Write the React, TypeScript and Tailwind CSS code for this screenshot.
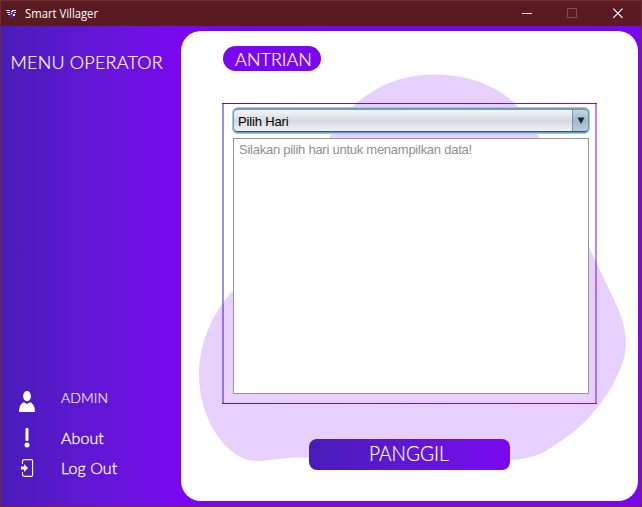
function TitleBar() {
  return (
    <header className="flex h-[25px] shrink-0 items-center bg-[#5b1922] text-white">
      <svg className="ml-[5px]" width="12" height="12" viewBox="0 0 12 12" shapeRendering="crispEdges">
        <path d="M0 2h4v1H0zM6 2h4v1H6zM1 4h3v1H1zM5 3h2v1H5zM8 4h2v1H8zM2 6h2v1H2zM7 6h2v2H7z" fill="#fff" />
        <path d="M4 4h3v2H4zM4 6h3v3H4zM5 9h1v1H5z" fill="#5b20d8" />
        <path d="M5 5h1v1H5z" fill="#fff" />
      </svg>
      <span className="ml-[7px] origin-left scale-x-[0.94] font-['Open_Sans',sans-serif] text-[12px] leading-none whitespace-nowrap">Smart Villager</span>
      <div className="ml-auto flex items-center">
        <svg width="120" height="25" viewBox="521 1 120 25" fill="none">
          <path d="M522 13.5h10" stroke="#fff" />
          <path d="M567.5 8.5h9v9h-9z" stroke="#854c54" />
          <path d="M613.3 8.6l9.2 9.2M622.5 8.6l-9.2 9.2" stroke="#fff" strokeWidth="1.2" />
        </svg>
      </div>
    </header>
  );
}

function Sidebar() {
  return (
    <aside className="flex w-[180px] shrink-0 flex-col bg-linear-to-r from-[#481cb9] to-[#7a06f1] font-['Lato',sans-serif] text-white">
      <h1 className="mt-[25px] ml-[9.500px] text-[18px] leading-[22px] font-light tracking-[0.2px] whitespace-nowrap [-webkit-text-stroke:0.2px_white]">MENU OPERATOR</h1>
      <nav className="mt-auto mb-[23px] ml-[18px] flex flex-col">
        <a className="flex h-[33px] items-start">
          <svg width="16" height="22" viewBox="0 0 16 22" fill="#fff" className="mt-px">
            <ellipse cx="8" cy="5.2" rx="3.9" ry="5.1" />
            <path d="M.2 21c0-5 1.1-8.4 4.800-9.800L8 13l3-1.800c3.700 1.400 4.900 4.800 4.900 9.800z" />
          </svg>
          <span className="ml-[26px] text-[14px] leading-[15px] font-light tracking-[0.1px] [-webkit-text-stroke:0.15px_white]">ADMIN</span>
        </a>
        <a className="flex h-[30px] items-center">
          <svg width="16" height="20" viewBox="0 0 16 20" fill="#fff">
            <rect x="6.500" y="0" width="3" height="13" rx="1" />
            <circle cx="8" cy="17" r="2.500" />
          </svg>
          <span className="ml-[26px] pb-px text-[16px] font-light tracking-[0.1px] [-webkit-text-stroke:0.3px_white]">About</span>
        </a>
        <a className="flex h-[30px] items-center">
          <svg width="16" height="18" viewBox="0 0 16 18" fill="none" stroke="#fff">
            <path d="M3.500 5V2.500Q3.500.6 5.300.6h6.900q1.400 0 1.400 1.400v14q0 1.400-1.400 1.400H5.300q-1.800 0-1.800-1.900V13" strokeWidth="1.100" />
            <path d="M2 7.400h3V5l4 4-4 4v-2.400H2z" fill="#fff" stroke="none" />
          </svg>
          <span className="ml-[26px] pb-px text-[16px] font-light tracking-[0.1px] [-webkit-text-stroke:0.3px_white]">Log Out</span>
        </a>
      </nav>
    </aside>
  );
}

function Backdrop() {
  return (
    <svg className="absolute inset-0" width="457" height="470" viewBox="181 31 457 470">
      <path
        d="M435 74.500C468 74.500 499 86 517 106C553 148 566 198 589 247L616 304C622 317 626 331 626 344C626 373 594 423 556 444C543 455 528 459 510 460C440 464 380 459 309 458C290 456 275 460 258 461C247 461 238 457 229 449C210 432 199 402 199 375C199 342 213 312 233 291C282 244 292 197 329 138C349 102 384 74.500 435 74.500Z"
        fill="#e7d1fc"
      />
    </svg>
  );
}

function DaySelect() {
  return (
    <button className="flex h-[27px] w-full rounded-[6px] border border-[#a3c6e5] bg-[#6b9cc6] p-px text-left font-['Liberation_Sans',sans-serif] text-[13px] text-black">
      <span className="flex h-full w-full overflow-hidden rounded-[4px] border-t border-b border-t-[#8795a2] border-b-[#3f5467]">
        <span className="flex-1 bg-linear-to-b from-[#f4f5f7] via-[#d5d9df] to-[#edf1f8] pt-[4px] pl-[4px] leading-[16px] tracking-[-0.15px]">Pilih Hari</span>
        <span className="flex h-full w-[16px] items-center justify-center border-l border-[#7899b0] bg-linear-to-b from-[#c5d5e2] via-[#a3b8cc] to-[#bbcddd]">
          <svg width="8" height="7" viewBox="0 0 8 7"><path d="M.5.5h7L4 7z" fill="#20262b" /></svg>
        </span>
      </span>
    </button>
  );
}

function QueuePanel() {
  return (
    <main className="relative mt-[5px] mb-[5px] h-[470px] w-[457px] overflow-hidden rounded-[20px] bg-white">
      <Backdrop />
      <div className="relative flex flex-col">
        <h2 className="mt-[15px] ml-[42px] flex h-[25px] w-[98px] items-center justify-center rounded-full bg-[#7a06f1] pt-[2px] pl-[3px] font-['Lato',sans-serif] text-[18px] font-light text-white [-webkit-text-stroke:0.2px_white]">
          <span>ANTRIAN</span>
        </h2>
        <section className="mt-[32px] ml-[41px] flex h-[301px] w-[375px] flex-col">
          <div className="h-px bg-linear-to-r from-[#481cb9] to-[#7a06f1]" />
          <div className="flex-1 border-r-2 border-l-2 border-r-[#7a06f1]/50 border-l-[#481cb9]/50 pt-[3px] pr-[5px] pl-[8px]">
            <DaySelect />
            <div className="mt-[4px] ml-px h-[256px] w-[356px] border border-[#9297a1] bg-white pt-[3px] pl-[5px] font-['Liberation_Sans',sans-serif] text-[13px] leading-[15px] tracking-[-0.255px] whitespace-nowrap text-[#8e8f91]">
              Silakan pilih hari untuk menampilkan data!
            </div>
          </div>
          <div className="h-px bg-linear-to-r from-[#481cb9] to-[#7a06f1]" />
        </section>
        <button className="mt-[35px] ml-[128px] flex h-[31px] w-[201px] items-center justify-center rounded-[8px] bg-linear-to-r from-[#481cb9] to-[#7a06f1] pr-px pb-[5px] font-['Lato',sans-serif] text-[21px] leading-none font-light text-white">
          <span className="scale-x-[0.91] [-webkit-text-stroke:0.2px_white]">PANGGIL</span>
        </button>
      </div>
    </main>
  );
}

export default function App() {
  return (
    <div className="flex h-[507px] w-[642px] flex-col overflow-hidden border border-[#6e2c34] bg-[#7a06f1]">
      <TitleBar />
      <div className="flex min-h-0 flex-1">
        <Sidebar />
        <QueuePanel />
      </div>
    </div>
  );
}
